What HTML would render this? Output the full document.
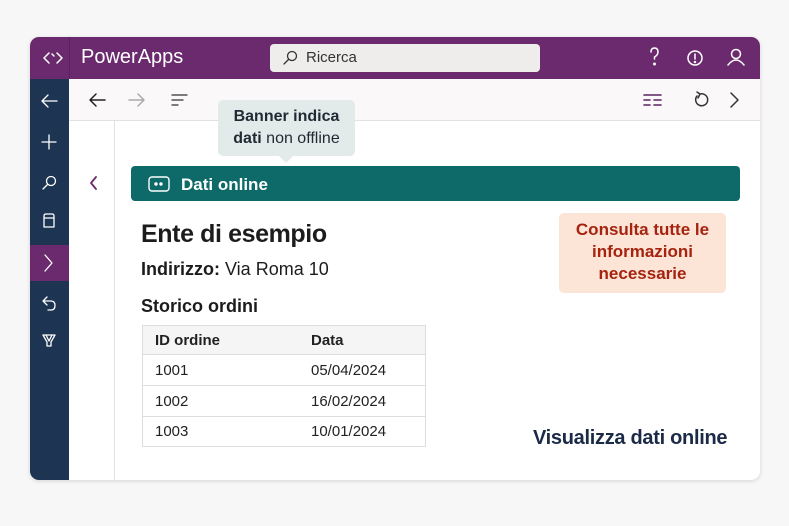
<!DOCTYPE html>
<html><head><meta charset="utf-8"><style>
*{margin:0;padding:0;box-sizing:border-box}
body{width:789px;height:526px;background:#f7f7f7;font-family:"Liberation Sans",sans-serif;position:relative;overflow:hidden}
.win{position:absolute;left:30px;top:37px;width:730px;height:443px;border-radius:9px;overflow:hidden;background:#fff;box-shadow:0 1px 4px rgba(0,0,0,.15)}
.hdr{position:absolute;left:0;top:0;width:730px;height:42px;background:#6b2a6e}
.side{position:absolute;left:0;top:42px;width:39px;height:401px;background:#1d3452}
.tb{position:absolute;left:39px;top:42px;width:691px;height:42px;background:#faf8f8;border-bottom:1px solid #e2e0e0}
.vl{position:absolute;left:84px;top:84px;width:1px;height:359px;background:#e2e2e2}
.abs{position:absolute}
svg{position:absolute;overflow:visible}
</style></head><body>
<div class="win">
<div class="hdr">
 <svg width="730" height="42" fill="none" stroke="#fff" stroke-width="1.5" stroke-linecap="round" stroke-linejoin="round">
  <path d="M14 21 L19 16 M14 21 L19 26 M27 16 L32 21 L27 26 M22 17 L24 19"/>
  <line x1="39.5" y1="0" x2="39.5" y2="42" stroke="#5a2260" stroke-width="1"/>
  <path d="M621 15 q0-4 3.5-4 q3.5 0 3.5 4 q0 3-3.5 5 v2"/><circle cx="624.5" cy="27" r=".7" fill="#fff"/>
  <circle cx="665" cy="21" r="7"/><path d="M665 17 v5"/><circle cx="665" cy="25" r=".5" fill="#fff"/>
  <circle cx="706" cy="17" r="4.5"/><path d="M698 28 q8-10 16 0"/>
 </svg>
 <div class="abs" style="left:51px;top:9px;color:#fff;font-size:20px">PowerApps</div>
 <div class="abs" style="left:240px;top:7px;width:270px;height:28px;background:#efedec;border-radius:4px"></div>
 <div class="abs" style="left:276px;top:12px;color:#333;font-size:15px">Ricerca</div>
 <svg width="730" height="42" fill="none" stroke="#333" stroke-width="1.3" stroke-linecap="round"><circle cx="262" cy="19" r="4.5"/><path d="M258.5 22.5 L254 27"/></svg>
</div>
<div class="side">
 <div class="abs" style="left:0;top:166px;width:39px;height:36px;background:#6b2a6e"></div>
 <svg width="39" height="401" fill="none" stroke="#fff" stroke-width="1.3" stroke-linecap="round" stroke-linejoin="round">
  <path d="M12 22 H27 M12 22 L18 16 M12 22 L18 28"/>
  <path d="M19 56 V70 M12 63 H26"/>
  <circle cx="21" cy="102" r="4.5"/><path d="M17.5 105.5 L13 110"/>
  <path d="M14 148 V137 Q14 135 16 135 H22 Q24 135 24 137 V148 Z M14 139 H24"/>
  <path d="M15 176 L22 184 L15 192"/>
  <path d="M13 222 L17 218 M13 222 L17 226 M13 222 H21 Q25 222 25 226.5 Q25 231 21 231 H18"/>
  <path d="M13 256 H25 L21 263 V267 H17 V263 Z M16 256 L19 262 L22 256"/>
 </svg>
</div>
<div class="tb">
 <svg width="691" height="42" fill="none" stroke-width="1.5" stroke-linecap="round" stroke-linejoin="round">
  <path d="M21 21 H36 M21 21 L27 15 M21 21 L27 27" stroke="#222"/>
  <path d="M60 21 H75 M75 21 L69 15 M75 21 L69 27" stroke="#aaa"/>
  <path d="M103 16 H118 M103 21 H114 M103 26 H109" stroke="#333" stroke-width="1.3"/>
  <path d="M575 16 H592 M575 21 H581 M585 21 H592 M575 26 H581 M585 26 H592" stroke="#5a2260" stroke-width="1.6"/>
  <path d="M628 17 A6 6 0 1 0 631 15 M628 13 L631 15 L629 19" stroke="#333"/>
  <path d="M662 14 L669 21 L662 28" stroke="#333"/>
 </svg>
</div>
<div class="vl"></div>
<svg width="100" height="200" fill="none" stroke="#6b2a6e" stroke-width="1.8" stroke-linecap="round" stroke-linejoin="round"><path d="M66 140 L61 146 L66 152"/></svg>
<div class="abs" style="left:101px;top:129px;width:609px;height:35px;background:#0e6a68;border-radius:4px"></div>
<svg width="200" height="200" fill="none" stroke="#fff" stroke-width="1.4"><rect x="119" y="140" width="20" height="14" rx="3"/><circle cx="126" cy="147" r="1" fill="#fff"/><circle cx="131" cy="147" r="1" fill="#fff"/></svg>
<div class="abs" style="left:151px;top:138px;color:#fff;font-size:17px;font-weight:bold">Dati online</div>
<div class="abs" style="left:188px;top:63px;width:137px;height:56px;background:#e2eaea;border-radius:5px;text-align:center;font-size:16px;line-height:22px;color:#1f2a33;padding-top:6px"><b>Banner indica</b><br><b>dati</b> non offline</div>
<div class="abs" style="left:249px;top:119px;width:0;height:0;border-left:7px solid transparent;border-right:7px solid transparent;border-top:7px solid #e2eaea"></div>
<div class="abs" style="left:111px;top:183px;font-size:25px;color:#1c1c1c;font-weight:bold;letter-spacing:-.4px">Ente di esempio</div>
<div class="abs" style="left:111px;top:222px;font-size:18px;color:#1c1c1c"><b>Indirizzo:</b> Via Roma 10</div>
<div class="abs" style="left:111px;top:259px;font-size:18px;color:#1c1c1c;font-weight:bold">Storico ordini</div>
<div class="abs" style="left:112px;top:288px;width:284px;height:122px;border:1px solid #ddd;font-size:15px;color:#222">
 <div style="height:29px;background:#f5f5f5;border-bottom:1px solid #ddd;position:relative;font-weight:bold"><span class="abs" style="left:12px;top:6px">ID ordine</span><span class="abs" style="left:168px;top:6px">Data</span></div>
 <div style="height:31px;border-bottom:1px solid #ddd;position:relative"><span class="abs" style="left:12px;top:7px">1001</span><span class="abs" style="left:168px;top:7px">05/04/2024</span></div>
 <div style="height:31px;border-bottom:1px solid #ddd;position:relative"><span class="abs" style="left:12px;top:7px">1002</span><span class="abs" style="left:168px;top:7px">16/02/2024</span></div>
 <div style="height:29px;position:relative"><span class="abs" style="left:12px;top:6px">1003</span><span class="abs" style="left:168px;top:6px">10/01/2024</span></div>
</div>
<div class="abs" style="left:529px;top:176px;width:167px;height:80px;background:#fce5d6;border-radius:5px;text-align:center;font-size:17px;line-height:22px;color:#a5230f;font-weight:bold;padding-top:6px">Consulta tutte le<br>informazioni<br>necessarie</div>
<div class="abs" style="left:503px;top:390px;font-size:20px;color:#1b2a47;font-weight:bold;letter-spacing:-.3px">Visualizza dati online</div>
</div>
</body></html>
